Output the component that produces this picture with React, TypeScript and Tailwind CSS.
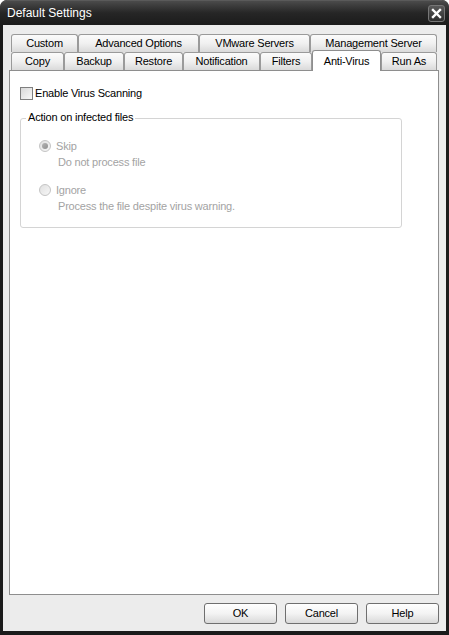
import React from "react";

const row1 = [
  { label: "Custom", w: 67 },
  { label: "Advanced Options", w: 121 },
  { label: "VMware Servers", w: 111 },
  { label: "Management Server", w: 127 },
];

const row2 = [
  { label: "Copy", w: 53 },
  { label: "Backup", w: 60 },
  { label: "Restore", w: 59 },
  { label: "Notification", w: 77 },
  { label: "Filters", w: 52 },
  { label: "Anti-Virus", w: 69, active: true },
  { label: "Run As", w: 56 },
];

function Tab({ label, w, active }: { label: string; w: number; active?: boolean }) {
  if (active) {
    return (
      <div
        style={{ width: w }}
        className="relative z-10 -mt-[2px] h-[21px] -mb-[1px] flex items-start justify-center pt-[2px] border border-b-0 border-[#8e8e8e] rounded-t-[3px] bg-white text-black"
      >
        {label}
      </div>
    );
  }
  return (
    <div
      style={{ width: w }}
      className="h-[18px] flex items-center justify-center border border-b-0 border-[#9a9a9a] rounded-t-[3px] bg-gradient-to-b from-[#fbfbfb] via-[#f0f0f0] to-[#dadada] text-black"
    >
      {label}
    </div>
  );
}

function Radio({ checked }: { checked?: boolean }) {
  return (
    <div className="w-[12px] h-[12px] rounded-full border border-[#c4c4c4] bg-gradient-to-br from-[#e0e0e0] to-[#f7f7f7] flex items-center justify-center">
      {checked && <div className="w-[6px] h-[6px] rounded-full bg-gradient-to-br from-[#b5b5b5] to-[#8f8f8f]" />}
    </div>
  );
}

function Button({ children }: { children: React.ReactNode }) {
  return (
    <div className="w-[73px] h-[21px] rounded-[3px] border border-[#6f6f6f] bg-gradient-to-b from-[#ffffff] via-[#f3f3f3] to-[#d9d9d9] flex items-center justify-center text-black">
      {children}
    </div>
  );
}

export default function App() {
  return (
    <div className="w-[449px] h-[635px] bg-[#1b1b1b] rounded-t-[7px] flex flex-col font-['Liberation_Sans',Arial,sans-serif] text-[11px] tracking-[-0.2px] overflow-hidden">
      {/* Title bar */}
      <div className="h-[25px] flex items-center justify-between pl-[7px] pr-[4px] rounded-t-[7px] bg-gradient-to-b from-[#4b4b4b] via-[#262626] to-[#1b1b1b] border-t border-[#5a5a5a]">
        <span className="text-white text-[12px] tracking-normal leading-none">Default Settings</span>
        <div className="w-[17px] h-[17px] rounded-[3px] border border-[#777] bg-gradient-to-b from-[#5a5a5a] to-[#2e2e2e] flex items-center justify-center">
          <svg width="11" height="11" viewBox="0 0 11 11">
            <path d="M2 2 L9 9 M9 2 L2 9" stroke="white" strokeWidth="2.4" strokeLinecap="square" />
          </svg>
        </div>
      </div>

      {/* Client area */}
      <div className="flex-1 mx-[3px] mb-[4px] bg-[#ececec] flex flex-col pt-[9px] pl-[6px] pr-[7px]">
        {/* Tabs */}
        <div className="pl-[2px] flex flex-col">
          <div className="flex">
            {row1.map((t) => (
              <Tab key={t.label} {...t} />
            ))}
          </div>
          <div className="flex items-end">
            {row2.map((t) => (
              <Tab key={t.label} {...t} />
            ))}
          </div>
        </div>

        {/* Panel */}
        <div className="h-[525px] bg-white border border-[#8e8e8e] pt-[16px] pl-[10px] pr-[36px] flex flex-col">
          <div className="flex items-center gap-[2px] h-[13px]">
            <div className="w-[13px] h-[13px] border border-[#7f7f7f] bg-gradient-to-br from-[#d8d8d8] to-[#f8f8f8]" />
            <span className="text-black leading-none">Enable Virus Scanning</span>
          </div>

          <div className="relative mt-[18px] h-[110px] border border-[#d4d4d4] rounded-[3px] pt-[21px] pl-[18px]">
            <span className="absolute -top-[7px] left-[5px] bg-white px-[2px] text-black leading-none">
              Action on infected files
            </span>
            <div className="flex items-center gap-[5px]">
              <Radio checked />
              <span className="text-[#a3a3a3] leading-none">Skip</span>
            </div>
            <div className="pl-[19px] mt-[5px] text-[#a3a3a3] leading-none">Do not process file</div>
            <div className="flex items-center gap-[5px] mt-[16px]">
              <Radio />
              <span className="text-[#a3a3a3] leading-none">Ignore</span>
            </div>
            <div className="pl-[19px] mt-[5px] text-[#a3a3a3] leading-none">
              Process the file despite virus warning.
            </div>
          </div>
        </div>

        {/* Buttons */}
        <div className="mt-[8px] flex justify-end gap-[8px]">
          <Button>OK</Button>
          <Button>Cancel</Button>
          <Button>Help</Button>
        </div>
      </div>
    </div>
  );
}
